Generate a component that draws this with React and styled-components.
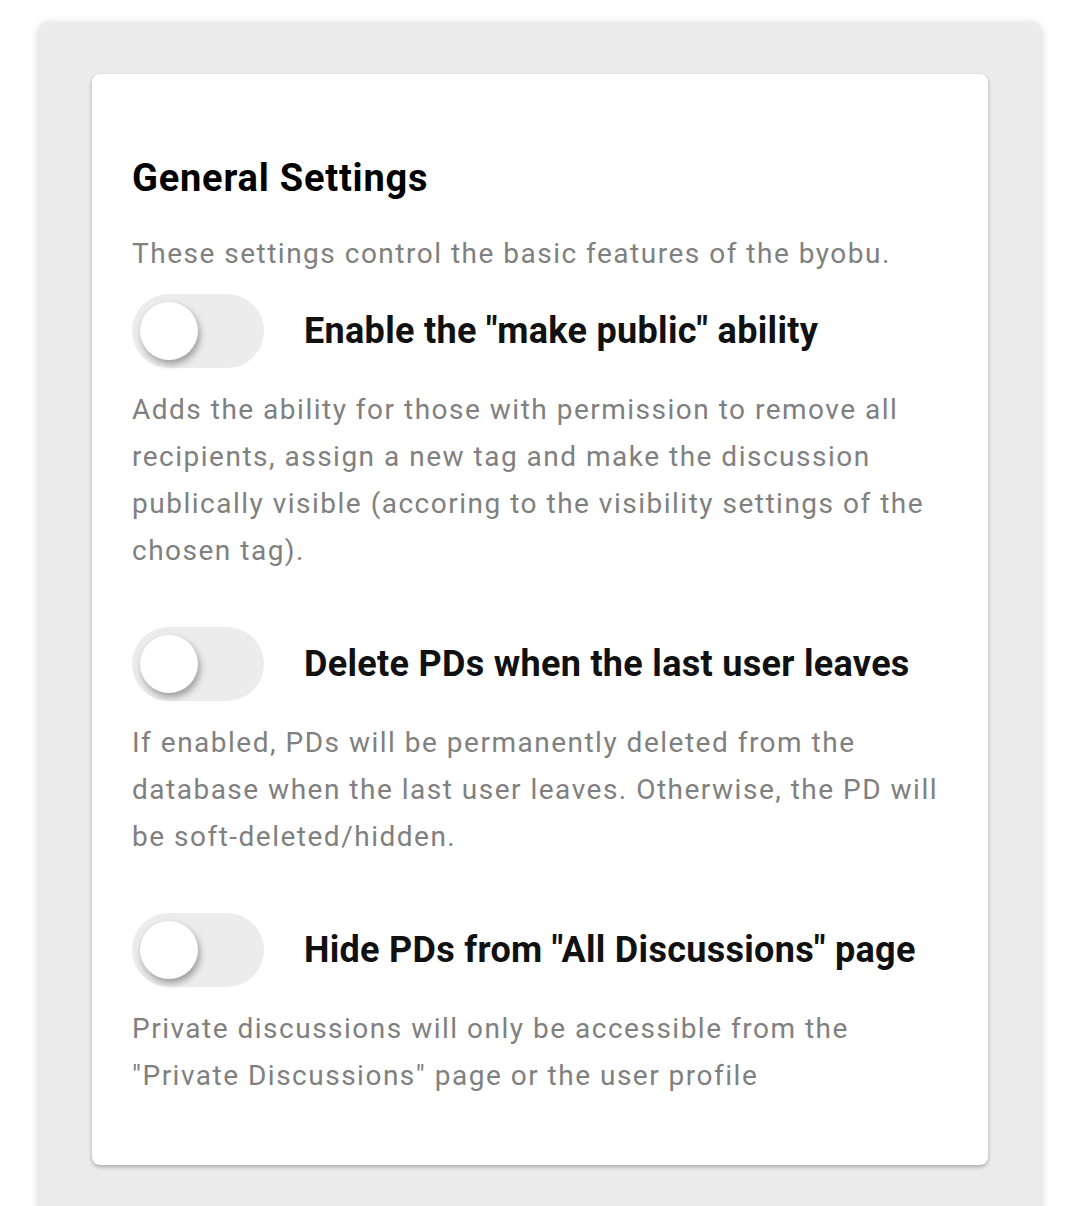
import React, { useState } from "react";
import styled, { createGlobalStyle } from "styled-components";

const GlobalStyle = createGlobalStyle`
  html, body {
    margin: 0;
    padding: 0;
    background: #ffffff;
    font-family: Roboto, "Noto Sans", sans-serif;
  }
`;

const Page = styled.div`
  padding: 22px 39px 0;
  height: 1206px;
  box-sizing: border-box;
  overflow: hidden;
`;

const Panel = styled.div`
  background: #ececec;
  border-radius: 10px;
  box-shadow: 0 2px 8px rgba(0, 0, 0, 0.22);
  padding: 52px 53px 80px;
`;

const Card = styled.div`
  background: #ffffff;
  border-radius: 8px;
  box-shadow: 0 2px 4px rgba(0, 0, 0, 0.3);
  padding: 83px 40px 66px;
`;

const Title = styled.h2`
  margin: 0;
  font-size: 38px;
  line-height: 43px;
  font-weight: 700;
  letter-spacing: 0.8px;
  color: #000;
`;

const Intro = styled.p`
  margin: 30px 0 0;
  font-size: 28px;
  line-height: 47px;
  letter-spacing: 1.5px;
  color: #808080;
`;

const Setting = styled.div`
  margin-top: ${(p) => (p.$first ? "17px" : "53px")};
`;

const Row = styled.label`
  display: flex;
  align-items: center;
  gap: 40px;
  cursor: pointer;
`;

const Track = styled.span`
  position: relative;
  flex: none;
  width: 132px;
  height: 74px;
  border-radius: 37px;
  background: ${(p) => (p.$on ? "#9ab7e6" : "#ececec")};
  transition: background 0.2s;
`;

const Knob = styled.span`
  position: absolute;
  top: 8px;
  left: ${(p) => (p.$on ? "66px" : "8px")};
  width: 58px;
  height: 58px;
  border-radius: 50%;
  background: #ffffff;
  box-shadow: 2px 4px 7px rgba(0, 0, 0, 0.35);
  transition: left 0.2s;
`;

const Label = styled.span`
  font-size: 36px;
  line-height: 42px;
  font-weight: 700;
  letter-spacing: 0.3px;
  color: #111;
`;

const Help = styled.p`
  margin: 18px 0 0;
  font-size: 28px;
  line-height: 47px;
  letter-spacing: 1.5px;
  color: #808080;
`;

const settings = [
  {
    id: "makePublic",
    label: 'Enable the "make public" ability',
    help:
      "Adds the ability for those with permission to remove all recipients, assign a new tag and make the discussion publically visible (accoring to the visibility settings of the chosen tag).",
  },
  {
    id: "deleteOnLeave",
    label: "Delete PDs when the last user leaves",
    help:
      "If enabled, PDs will be permanently deleted from the database when the last user leaves. Otherwise, the PD will be soft-deleted/hidden.",
  },
  {
    id: "hideFromAll",
    label: 'Hide PDs from "All Discussions" page',
    help:
      'Private discussions will only be accessible from the "Private Discussions" page or the user profile',
  },
];

function Toggle({ on, onClick }) {
  return (
    <Track $on={on} onClick={onClick}>
      <Knob $on={on} />
    </Track>
  );
}

export default function App() {
  const [values, setValues] = useState({});

  const flip = (id) => setValues((prev) => ({ ...prev, [id]: !prev[id] }));

  return (
    <>
      <GlobalStyle />
      <Page>
        <Panel>
          <Card>
            <Title>General Settings</Title>
            <Intro>These settings control the basic features of the byobu.</Intro>
            {settings.map((s, i) => (
              <Setting key={s.id} $first={i === 0}>
                <Row>
                  <Toggle on={!!values[s.id]} onClick={() => flip(s.id)} />
                  <Label>{s.label}</Label>
                </Row>
                <Help>{s.help}</Help>
              </Setting>
            ))}
          </Card>
        </Panel>
      </Page>
    </>
  );
}
